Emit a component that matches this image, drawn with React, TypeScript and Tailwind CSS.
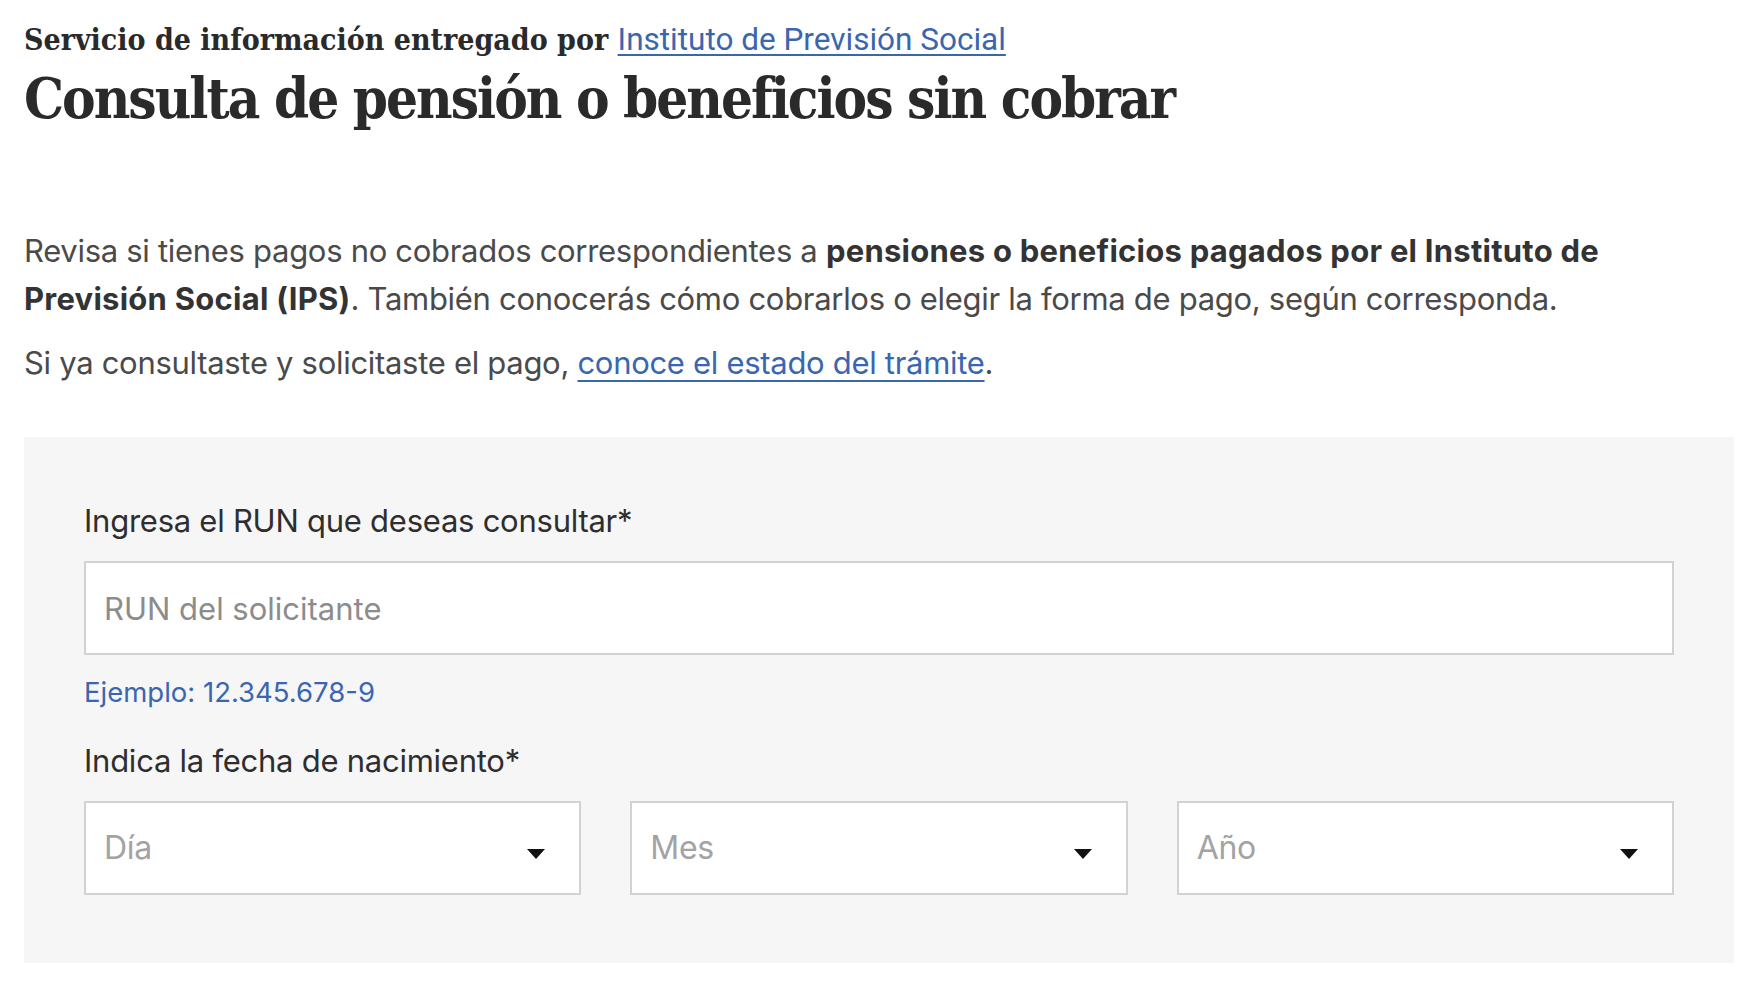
import { useState } from "react";

const slab = { fontFamily: '"Roboto Slab", "DejaVu Serif Condensed", "DejaVu Serif", serif' };

function Caret() {
  return (
    <svg width="18" height="10" viewBox="0 0 18 10" className="shrink-0 mt-3">
      <path d="M0 0H18L9 10Z" fill="#111" />
    </svg>
  );
}

function SelectBox({ label }: { label: string }) {
  return (
    <button
      type="button"
      className="flex h-[94px] w-full items-center justify-between border-2 border-[#d2d2d2] bg-white pl-[18px] pr-[34px] text-left text-[32px] tracking-[-0.3px] text-[#a3a3a3]"
    >
      <span>{label}</span>
      <Caret />
    </button>
  );
}

export default function App() {
  const [run, setRun] = useState("");

  return (
    <div
      className="min-h-screen bg-white px-6 text-[#333]"
      style={{ fontFamily: 'Inter, "Open Sans", "Liberation Sans", sans-serif' }}
    >
      {/* Encabezado */}
      <header className="pt-[18px]">
        <p className="text-[30px] leading-[44px] font-bold text-[#2a2a2a]" style={slab}>
          Servicio de información entregado por{" "}
          <a
            href="#"
            className="text-[31.5px] font-normal text-[#3a66b0] underline decoration-2 underline-offset-4"
            style={{ fontFamily: 'Roboto, "Liberation Sans", sans-serif' }}
          >
            Instituto de Previsión Social
          </a>
        </p>
        <h1
          className="mt-[4px] text-[56px] leading-[64px] font-bold tracking-[-2px] text-[#2a2a2a]"
          style={slab}
        >
          Consulta de pensión o beneficios sin cobrar
        </h1>
      </header>

      {/* Introducción */}
      <div className="mt-[97px] text-[31px] leading-[48px] tracking-[-0.3px] text-[#4a4a4a]">
        <p>
          Revisa si tienes pagos no cobrados correspondientes a{" "}
          <strong className="font-bold tracking-[0.25px] text-[#333]">
            pensiones o beneficios pagados por el Instituto de Previsión Social (IPS)
          </strong>
          . También conocerás cómo cobrarlos o elegir la forma de pago, según corresponda.
        </p>
        <p className="mt-4">
          Si ya consultaste y solicitaste el pago,{" "}
          <a href="#" className="text-[#3a66b0] underline decoration-2 underline-offset-[6px]">
            conoce el estado del trámite
          </a>
          .
        </p>
      </div>

      {/* Formulario */}
      <section className="mt-[50px] bg-[#f6f6f6] px-[60px] pt-[60px] pb-[68px]">
        <label
          className="block text-[31px] leading-[48px] tracking-[-0.25px] text-[#2e2e2e]"
          htmlFor="run"
        >
          Ingresa el RUN que deseas consultar*
        </label>
        <input
          id="run"
          value={run}
          onChange={(e) => setRun(e.target.value)}
          placeholder="RUN del solicitante"
          className="mt-4 block h-[94px] w-full border-2 border-[#d2d2d2] bg-white px-[18px] text-[31px] text-[#333] outline-none placeholder:text-[#8c8c8c]"
        />
        <p className="mt-[16px] text-[27.5px] leading-[42px] text-[#3a66b0]">Ejemplo: 12.345.678-9</p>

        <div className="mt-[24px] text-[31px] leading-[48px] tracking-[-0.25px] text-[#2e2e2e]">
          Indica la fecha de nacimiento*
        </div>
        <div className="mt-4 grid grid-cols-3 gap-[49px]">
          <SelectBox label="Día" />
          <SelectBox label="Mes" />
          <SelectBox label="Año" />
        </div>
      </section>
    </div>
  );
}
